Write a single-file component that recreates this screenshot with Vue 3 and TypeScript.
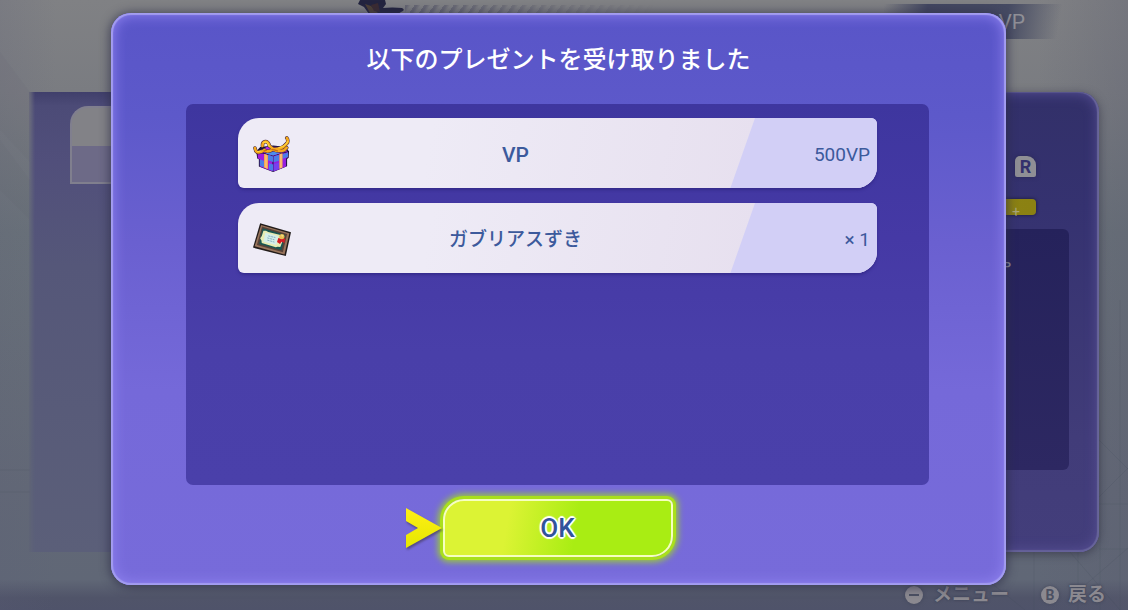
<script setup lang="ts">
interface Present {
  id: number
  kind: 'gift' | 'frame'
  name: string
  amount: string
}

const presents: Present[] = [
  { id: 1, kind: 'gift', name: 'VP', amount: '500VP' },
  { id: 2, kind: 'frame', name: 'ガブリアスずき', amount: '× 1' },
]
</script>

<template>
  <div class="screen">
    <div class="scene">
      <svg class="pattern" viewBox="0 0 1128 610" preserveAspectRatio="none" aria-hidden="true">
        <path d="M1100 420v190M1120 300v310M1099 504h29M1034 552v58M1099 440l29 29M1099 497l29-29M1070 552l50 58M1128 548l-60 52M975 570l50 40M1099 549h29M1078 552v58M0 470h30M0 492h30" />
        <path class="shade" d="M0 52l30 40v70L0 130zM0 140l30 40v40L0 190z" />
      </svg>
      <svg class="figure" viewBox="0 0 50 14" aria-hidden="true">
        <path fill="#23243f" d="M2 0h25l1 4-3 4q9-1 19 0 4 2-1 4l-3 2H11L6 7 0 4z" />
        <path fill="#4d4035" d="M7 4l6 2 7 7h-8z" />
        <path fill="#3a2b32" d="M13 5l7-2 2 9-6-1z" />
      </svg>
      <div class="stripes"></div>
      <header class="balance"><span class="balance-chip">VP</span></header>
      <div class="panels">
        <section class="side-panel"><div class="tab"></div></section>
        <section class="detail-panel">
          <span class="r-key">R</span>
          <span class="gauge"><i>+</i></span>
          <div class="detail-box">VP</div>
        </section>
      </div>
      <footer class="hints">
        <span class="hint">
          <svg viewBox="0 0 20 20" aria-hidden="true"><circle cx="10" cy="10" r="9" /><path d="M5 9h10v2H5z" /></svg>
          メニュー
        </span>
        <span class="hint">
          <span class="b-key">B</span>
          戻る
        </span>
      </footer>
    </div>

    <div class="overlay">
      <section class="dialog" role="dialog" aria-modal="true" aria-labelledby="dialog-title">
        <h1 id="dialog-title">以下のプレゼントを受け取りました</h1>
        <ul class="presents">
          <li v-for="p in presents" :key="p.id" class="present">
            <span class="icon">
              <svg v-if="p.kind === 'gift'" viewBox="66 74 117 114" aria-hidden="true">
                <path fill="#181536" d="M76 122l12-14 40-5 36 4 13 14-1 20-5 4v22l-43 18-44-17v-22l-5-3z" />
                <path fill="#a21bdc" d="M80 124l46 12v47l-39-15v-22l-6-3z" />
                <path fill="#9420e0" d="M129 136l45-13v16l-6 4v25l-39 15z" />
                <path fill="#4a7ce8" d="M112 132l16 5v17l-16-5zM130 137l16-5v18l-16 5zM87 146l14 5v20l-14-5zM157 130l17-5v14l-17 5zM115 158l13 4v20l-13-5z" />
                <path fill="#7840ee" d="M130 160l16-4v20l-16 6z" />
                <path fill="#b32bea" d="M82 121l28-14 48 1 15 13-45 13z" />
                <path fill="#4c8dee" d="M105 128l23-7 22 5-22 8z" />
                <path fill="#f6a950" d="M100 129l12 4v43l-12-5zM147 130l10-3v44l-10 4z" />
                <path fill="#fcc37b" d="M104 131l4 1v42l-4-2zM150 130l4-1v43l-4 2z" />
                <g fill="none" stroke-linecap="round" stroke-linejoin="round">
                  <g stroke="#3a2040" stroke-width="11">
                    <path d="M72 111q2 14 12 14 10-2 17-8" />
                    <path d="M95 105q-1-12 9-14 9 0 13 14l10 8" />
                    <path d="M128 114q20 2 33-8l11-11q3-9-2-15" />
                    <path d="M104 120q12 4 24-5 15 9 34 3l8-8" />
                  </g>
                  <g stroke="#f5a91b" stroke-width="8">
                    <path d="M72 111q2 14 12 14 10-2 17-8" />
                    <path d="M95 105q-1-12 9-14 9 0 13 14l10 8" />
                    <path d="M128 114q20 2 33-8l11-11q3-9-2-15" />
                    <path d="M104 120q12 4 24-5 15 9 34 3l8-8" />
                  </g>
                  <path d="M98 95q7-5 12 0l6 11M146 110q14-2 21-10l6-9M80 122l11-2" stroke="#ffd33a" stroke-width="4" />
                  <path d="M124 116l8 1 9 3M100 120l7-2" stroke="#c96d14" stroke-width="4" />
                </g>
              </svg>
              <svg v-else viewBox="66 78 117 102" aria-hidden="true">
                <path fill="#211b19" d="M88 79l95 28-16 73-101-26z" />
                <path fill="#98745b" d="M91 84l87 26-15 65-92-25z" />
                <path fill="#574238" d="M94 89l77 23-13 56-80-22z" />
                <path fill="#185551" d="M96 94l69 21-11 47-69-19z" />
                <path fill="#e6ebb3" d="M98 102l8 0 7 4 41 10 5 6-4 7 1 8-6 15-8-1-6 2-43-13-1-8-4-7 5-7z" />
                <path fill="#d4eee9" d="M104 108l40 10-6 28-40-10z" />
                <path d="M113 118l22 5M110 124l22 6M110 131l22 6" fill="none" stroke="#6293b0" stroke-width="2" stroke-dasharray="7 2" />
                <path fill="#d31c25" d="M144 124l9 3 12-2-2 15-9-4-5 7-9-6z" />
                <circle cx="155" cy="120" r="8" fill="#e9bd54" />
                <path fill="#f4dd83" d="M152 114l8 2-4 6z" />
              </svg>
            </span>
            <span class="name">{{ p.name }}</span>
            <span class="amount">{{ p.amount }}</span>
          </li>
        </ul>
        <div class="actions">
          <svg class="cursor" viewBox="0 0 38 42" aria-hidden="true">
            <defs>
              <linearGradient id="cursor-fill" x1="0" y1="0" x2="0" y2="1">
                <stop offset="0" stop-color="#ffef16" />
                <stop offset="1" stop-color="#e5e700" />
              </linearGradient>
            </defs>
            <path d="M1 1l36 20L1 41V28l12-7L1 14z" fill="url(#cursor-fill)" />
          </svg>
          <button type="button" class="ok">OK</button>
        </div>
      </section>
    </div>
  </div>
</template>

<style>
body {
  margin: 0;
}
</style>

<style scoped>
.screen {
  display: grid;
  min-height: 100vh;
  overflow: hidden;
  font-family: Roboto, 'Noto Sans CJK JP', sans-serif;
}

.scene,
.overlay {
  grid-area: 1 / 1;
  min-width: 0;
}

.scene {
  position: relative;
  display: flex;
  flex-direction: column;
  background:
    linear-gradient(90deg, rgba(90, 92, 118, 0.16), transparent 5%, transparent 92%, rgba(90, 92, 110, 0.3)),
    linear-gradient(#808184, #7a7c81 15%, #697179 38%, #626876 80%, #606776 95%, #505469 98%, #4f536a);
}

.pattern {
  position: absolute;
  inset: 0;
  width: 100%;
  height: 100%;
  fill: none;
  stroke: rgba(65, 75, 88, 0.16);
}

.pattern .shade {
  fill: rgba(80, 80, 110, 0.06);
  stroke: none;
}

.figure {
  position: absolute;
  top: 0;
  left: 358px;
  width: 50px;
}

.stripes {
  position: absolute;
  top: 5px;
  left: 405px;
  width: 250px;
  height: 8px;
  background: repeating-linear-gradient(125deg, rgba(70, 70, 95, 0.45) 0 2px, transparent 5px 8px);
  mask-image: linear-gradient(90deg, #000, transparent);
}

.balance {
  position: relative;
  display: flex;
  justify-content: flex-end;
  height: 88px;
  padding: 4px 66px 0 0;
}

.balance-chip {
  box-sizing: border-box;
  width: 178px;
  height: 35px;
  padding-right: 37px;
  background: linear-gradient(100deg, transparent, #424660 24%, #454a62 68%, transparent 97%);
  color: #8f8f96;
  font-size: 21px;
  line-height: 36px;
  text-align: right;
}

.panels {
  position: relative;
  display: grid;
  grid-template-columns: 1fr 1fr;
  flex: 1;
  min-height: 460px;
  padding: 0 29px;
}

.side-panel {
  padding: 14px 0 0 41px;
  background: linear-gradient(#403f6b, #4c4b77 3%, #514f7b 15%, #555779 38%, #5b5f79);
  mask-image: linear-gradient(90deg, rgba(0, 0, 0, 0.2), #000 6px);
}

.tab {
  box-sizing: border-box;
  height: 78px;
  border: 2px solid #807f8e;
  border-right: 0;
  border-radius: 18px 0 0 0;
  background: linear-gradient(#828287 0 38px, #6d6a87 38px);
}

.detail-panel {
  display: flex;
  flex-direction: column;
  align-items: flex-end;
  padding: 64px 30px 82px 0;
  border-radius: 0 20px 20px 0;
  background: linear-gradient(#323069, #353270 25%, #413c79 75%, #433e7b);
  box-shadow:
    inset -2px 0 1px #68659a,
    inset 0 1px 1px #57558b,
    inset 0 -2px 1px #65619a,
    inset 0 0 14px #5d559b,
    0 2px 10px rgba(40, 40, 60, 0.6);
}

.r-key {
  width: 21px;
  height: 21px;
  margin-right: 33px;
  border-radius: 5px 9px 2px 2px;
  background: #8f8f95;
  box-shadow: 0 0 4px #292953;
  color: #34316c;
  font-size: 18px;
  font-weight: 700;
  line-height: 21px;
  text-align: center;
}

.gauge {
  width: 200px;
  height: 16px;
  margin: 22px 33px 14px 0;
  border-radius: 4px;
  background: linear-gradient(90deg, #8e8518, #8b8112);
  box-shadow: 0 0 3px 1px #24224c;
  color: #aaa77a;
  font-size: 14px;
  line-height: 26px;
  text-align: right;
}

.gauge i {
  padding-right: 16px;
  font-style: normal;
}

.detail-box {
  box-sizing: border-box;
  flex: 1;
  align-self: stretch;
  padding: 28px 58px 0 0;
  border-radius: 6px;
  background: linear-gradient(#25225b, #2d2862);
  color: #8f8f9c;
  font-size: 13px;
  font-weight: 500;
  line-height: 20px;
  text-align: right;
}

.hints {
  position: relative;
  display: flex;
  justify-content: flex-end;
  align-items: center;
  gap: 32px;
  height: 26px;
  padding: 30px 22px 2px 0;
}

.hint {
  display: flex;
  align-items: center;
  gap: 9px;
  color: #8b8990;
  font-size: 19px;
  font-weight: 700;
  line-height: 26px;
  text-shadow: 0 0 2px #41465a, 0 0 3px #41465a;
}

.hint svg {
  width: 20px;
  height: 20px;
  fill: #8b8990;
  filter: drop-shadow(0 0 2px #41465a);
}

.hint svg path {
  fill: #4b5062;
}

.b-key {
  width: 18px;
  height: 18px;
  border-radius: 50%;
  background: #8b8990;
  box-shadow: 0 0 3px #41465a;
  color: #4b5062;
  font-size: 14px;
  line-height: 18px;
  text-align: center;
  text-shadow: none;
}

.overlay {
  position: relative;
  display: flex;
  padding: 13px 122px 25px 111px;
}

.dialog {
  display: flex;
  flex-direction: column;
  flex: 1;
  min-width: 0;
  border-radius: 20px;
  background: linear-gradient(#5955c8, #5d59ca 18%, #6a60d0 40%, #7569d9 66%, #776bda);
  box-shadow:
    inset 0 0 1px 2px #a39df0,
    inset 0 0 14px 2px #8f82f0,
    0 1px 10px 2px rgba(45, 45, 70, 0.65);
}

h1 {
  margin: 0;
  padding: 29px 20px 26px;
  color: #fff;
  font-size: 24px;
  font-weight: 500;
  line-height: 36px;
  text-align: center;
}

.presents {
  display: flex;
  flex-direction: column;
  flex: 1;
  gap: 15px;
  margin: 0 77px 0 75px;
  padding: 14px 52px;
  border-radius: 7px;
  background: linear-gradient(#3e369f, #4539a5 35%, #493fa9 65%, #4a40aa);
  list-style: none;
}

.present {
  display: grid;
  grid-template-columns: 64px 1fr 148px;
  align-items: center;
  height: 70px;
  overflow: hidden;
  border-radius: 21px 6px 21px 6px;
  background: linear-gradient(100deg, #eeebf6 30%, #e7e0ef 80%);
  box-shadow: 0 2px 3px rgba(44, 33, 125, 0.6);
  color: #3c5a9c;
}

.icon {
  padding: 0 0 2px 15px;
}

.icon svg {
  display: block;
  width: 38px;
  height: 37px;
}

.name {
  font-size: 19px;
  font-weight: 500;
  line-height: 28px;
  text-align: center;
}

.present:first-child .name {
  font-size: 21px;
}

.amount {
  box-sizing: border-box;
  height: 100%;
  padding-right: 7px;
  background: #d2cff6;
  clip-path: polygon(26px 0, 100% 0, 100% 100%, 0 100%);
  font-size: 19px;
  line-height: 74px;
  text-align: right;
}

.actions {
  display: grid;
  grid-template-columns: 1fr 230px 1fr;
  align-items: center;
  margin-right: 2px;
  padding: 14px 0 28px;
}

.cursor {
  justify-self: end;
  width: 38px;
  height: 42px;
  filter: drop-shadow(1px 2px 1px rgba(70, 60, 100, 0.7));
}

.ok {
  height: 58px;
  padding: 0;
  border: 2px solid #f6ffc0;
  border-radius: 21px 6px 21px 6px;
  background: linear-gradient(100deg, #dcf334 28%, #a9ed13 58%);
  box-shadow:
    0 0 0 3px #a9e01c,
    0 0 6px 5px #9ccb38;
  color: #31539b;
  font-family: inherit;
  font-size: 26px;
  font-weight: 500;
  line-height: 54px;
  text-shadow:
    2px 0 1px #fff,
    -2px 0 1px #fff,
    0 2px 1px #fff,
    0 -2px 1px #fff,
    1px 1px 1px #fff,
    -1px 1px 1px #fff,
    1px -1px 1px #fff,
    -1px -1px 1px #fff;
}
</style>
